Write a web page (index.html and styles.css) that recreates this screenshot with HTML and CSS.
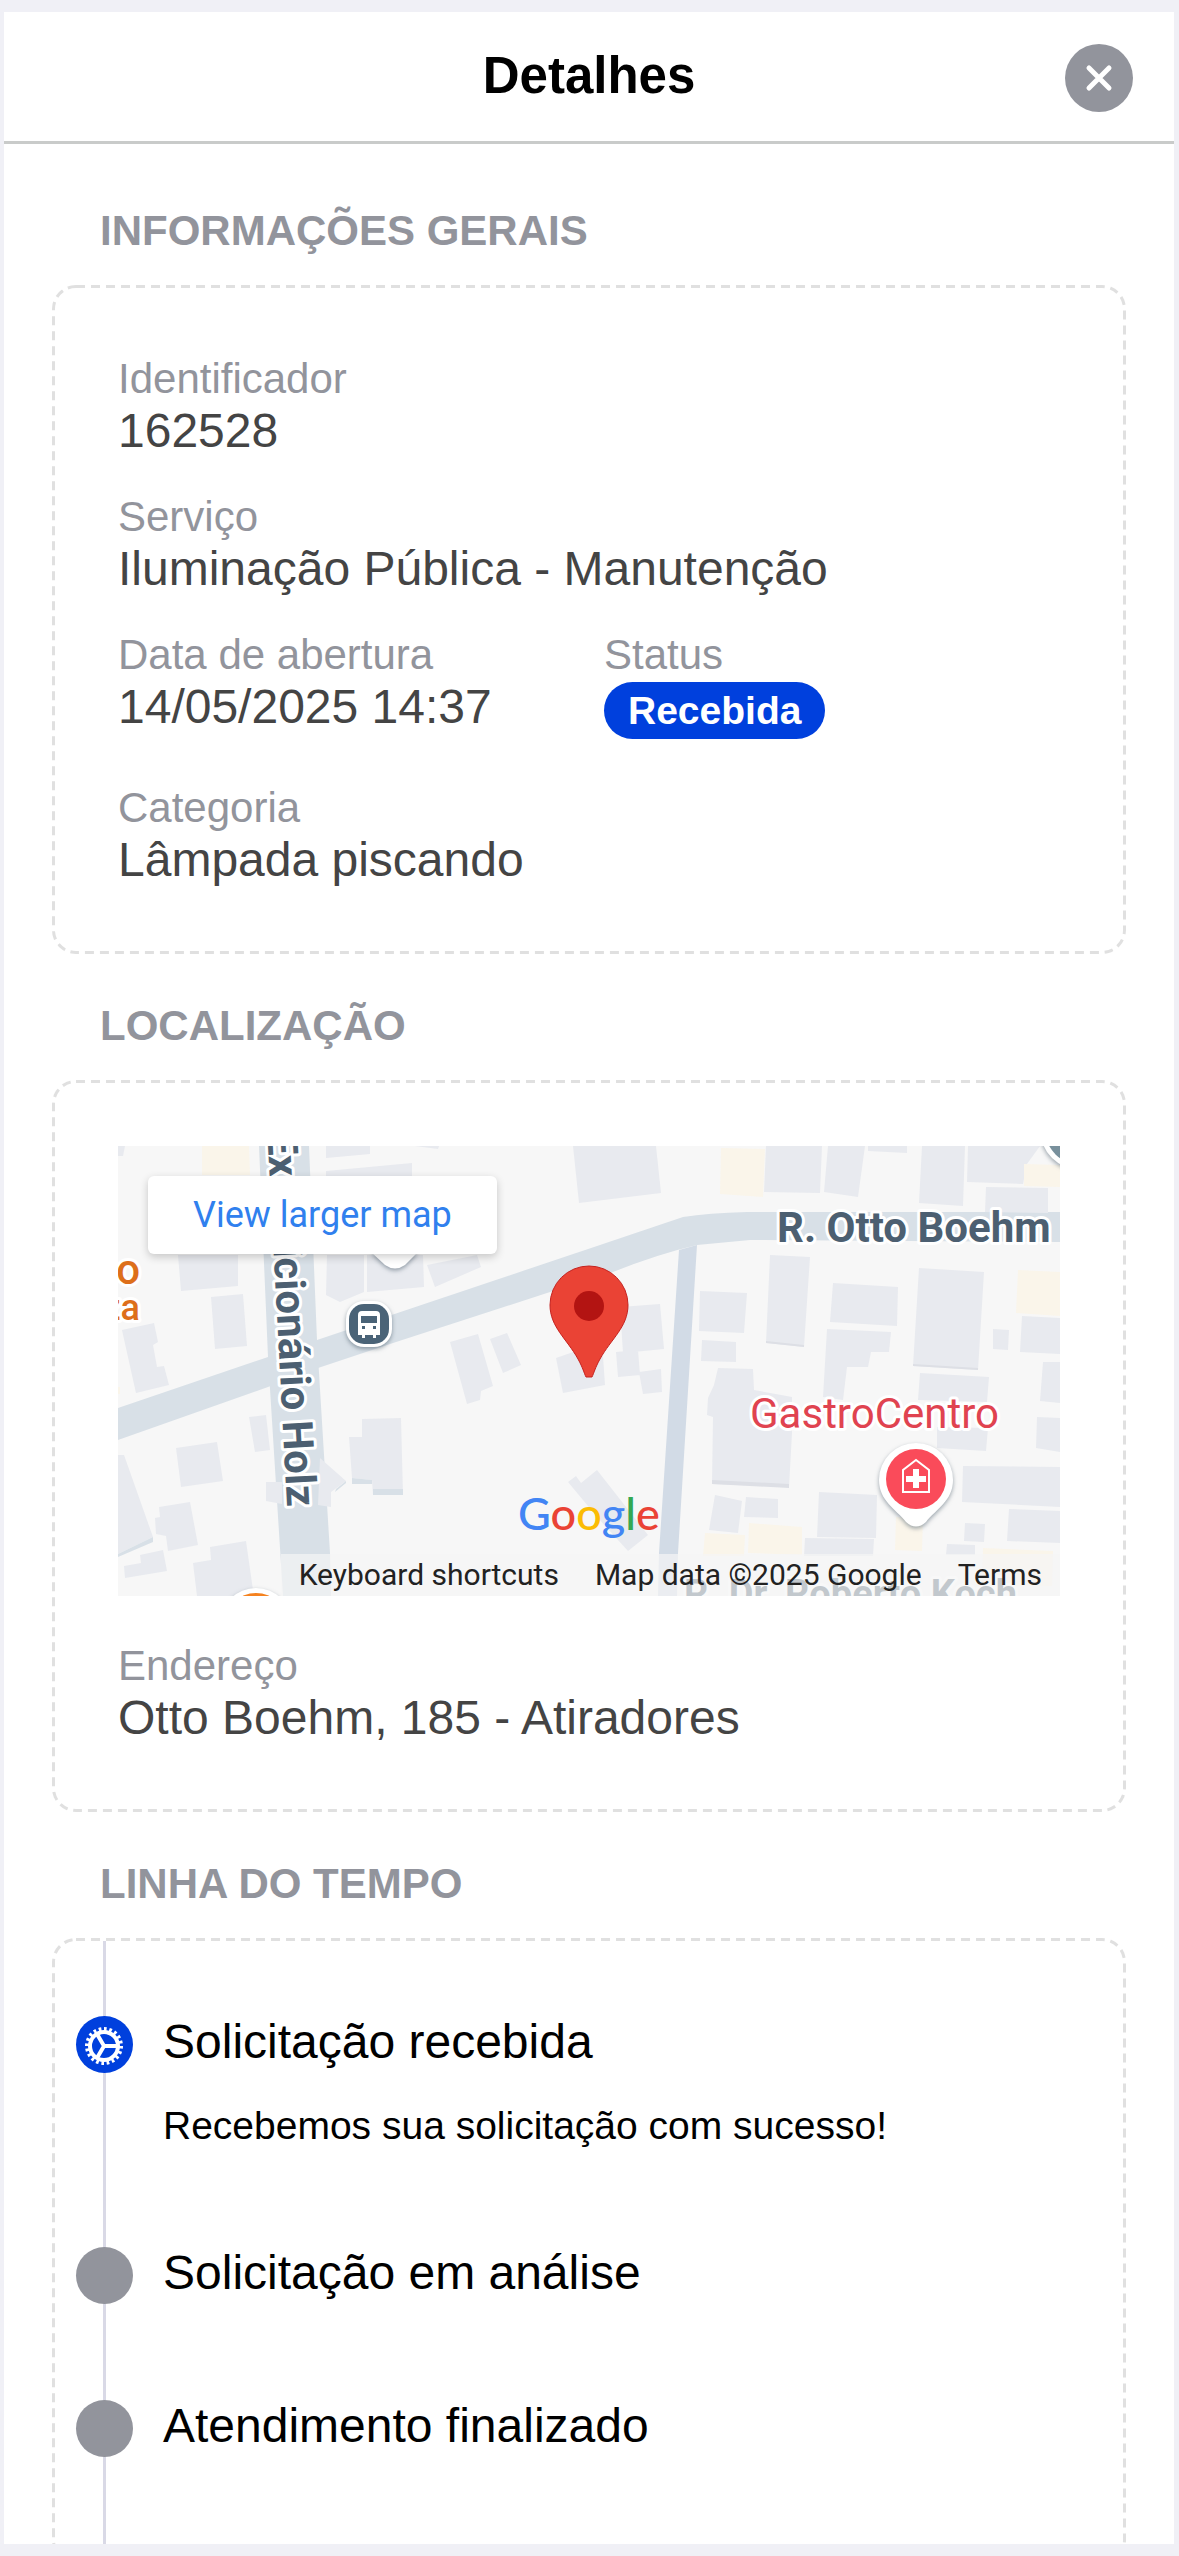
FILE: index.html
```html
<!DOCTYPE html>
<html lang="pt-BR">

<head>
    <meta charset="utf-8">
    <meta name="viewport" content="width=device-width, initial-scale=1">
    <title>Detalhes</title>
    <link rel="stylesheet" href="styles.css">
</head>

<body>
    <main class="modal">
        <header class="modal-header">
            <h1>Detalhes</h1>
            <button class="close" type="button" aria-label="Fechar">
                <svg viewBox="0 0 68 68">
                    <path d="M24 24 44 44M44 24 24 44" />
                </svg>
            </button>
        </header>
        <div class="content">
            <section>
                <h2>INFORMAÇÕES GERAIS</h2>
                <dl class="card">
                    <div class="field">
                        <dt>Identificador</dt>
                        <dd>162528</dd>
                    </div>
                    <div class="field">
                        <dt>Serviço</dt>
                        <dd>Iluminação Pública - Manutenção</dd>
                    </div>
                    <div class="columns">
                        <div class="field">
                            <dt>Data de abertura</dt>
                            <dd>14/05/2025 14:37</dd>
                        </div>
                        <div class="field">
                            <dt>Status</dt>
                            <dd class="badge">Recebida</dd>
                        </div>
                    </div>
                    <div class="field">
                        <dt>Categoria</dt>
                        <dd>Lâmpada piscando</dd>
                    </div>
                </dl>
            </section>

            <section>
                <h2>LOCALIZAÇÃO</h2>
                <div class="card">
                    <div class="map">
                        <svg class="map-canvas" viewBox="0 0 942 450" preserveAspectRatio="xMidYMid slice">
                            <rect class="land" width="942" height="450" />
                            <g class="road">
                                <path d="M0 262 150 211 199 194 482 99 565 71Q590 67 629 66H942V96L632 94 579 99Q540 108 495 126L429 147 275 197 200 222 150 241 0 294z" />
                                <path d="M141 0H191L199 194 212 407 213 450H165L150 211z" />
                            </g>
                            <path class="lane" d="M561 104 579 99 560 407 559 450H540L541 407z" />
                            <!-- buildings -->
                            <g class="building">
                                <path d="M0 0H7L5 10H0zM208 0H252V8L208 12zM297 0H321L320 3zM208 25 294 17V31H208zM455 0H538L543 47 461 57z" />
                                <path d="M60 109H120V140L63 145zM93 151 125 148 129 200 97 203zM4 184 36 177 40 196 35 199 39 221 46 220 51 239 18 247z" />
                                <path d="M209 109H246V146L222 156 208 149zM249 109H305L306 141 249 146zM309 119 359 109 363 121 317 141z" />
                                <path d="M332 196 360 188 375 240 363 245 362 254 349 258zM372 193 389 187 403 219 385 227zM438 212 484 196 487 239 445 247z" />
                                <path d="M131 271 148 269 152 304 137 306zM58 302 99 296 105 335 63 341zM0 309H6L35 391 0 408z" />
                                <path d="M37 372 42 371 41 361 72 356 80 399 50 405 48 390 38 388zM6 420 23 417 22 409 45 404 49 425 7 432z" />
                                <path d="M75 417 93 414 92 401 128 395 135 444V450H79zM244 273 283 272 285 349H255L254 334 234 332 231 291H244z" />
                                <path d="M148 336H164V358L148 355zM202 312 228 335 213 346V361L200 359zM450 336 458 330 463 337 479 324 530 389 510 405 480 372z" />
                                <path d="M648 0H704L702 47 646 46zM710 0H747L740 51 706 46zM750 0H789V7L750 5zM804 0H847L845 60 801 57z" />
                                <path d="M850 0H922L909 18 905 38 849 36zM868 41 930 42V67L867 66zM652 109 692 111 686 201 648 197z" />
                                <path d="M582 145 629 147 626 187 581 185zM584 194 618 196V216L583 215zM715 137 780 141 779 180 712 176z" />
                                <path d="M709 183 773 186 771 206H753L750 221H729L725 254 705 251zM801 122 866 126 860 224 795 220z" />
                                <path d="M904 170 942 172V208L902 206zM875 183 891 184 890 204 875 203zM925 216H942V257L922 255z" />
                                <path d="M802 227 871 231 869 256 800 254zM819 281 870 282 868 305 819 302zM919 271 942 272V306L918 302z" />
                                <path d="M600 222 635 223 636 244 674 251V287L671 341 594 338 595 271 589 269 590 252 596 239zM845 320 942 321V361L844 356z" />
                                <path d="M597 349 624 355 620 387 591 384zM628 351 660 353V372L626 371zM701 346 759 349 758 392 699 391zM687 392 756 393 755 410H686z" />
                                <path d="M847 377 867 378 866 396 846 395zM891 363 942 365V397L889 395zM829 398 857 399V409H828z" />
                                <path d="M502 161 542 158 546 203 505 207zM498 206 520 204 522 229 500 231zM521 226 543 223 544 246 525 248z" />
                            </g>
                            <g class="edge">
                                <path d="M0 408 35 391V396L0 411zM234 332 254 334V338H234zM255 343H285V349H255zM228 335 218 343 217 346 228 337z" />
                                <path class="shade" d="M594 334 671 338V342L594 338zM648 195 686 199V201L648 197zM795 218 860 222V224L795 220z" />
                            </g>
                            <g class="commerce">
                                <path d="M84 0H131L132 29H84zM603 2 647 3 645 51 602 48zM906 18 942 19V41L906 40zM900 124 942 126V170L898 167z" />
                                <path d="M587 387 627 389 626 410H585zM631 377 684 381V409L630 407zM778 371 805 372 804 405 777 404zM865 402 935 405 934 440H864zM0 241H2V248H0z" />
                            </g>
                            <!-- street names and places -->
                            <g class="street">
                                <text x="659" y="96">R. Otto Boehm</text>
                                <text transform="translate(169 361) rotate(87)" text-anchor="end">R. Expedicionário Holz</text>
                                <text class="street-small" x="566" y="461">R. Dr. Roberto Koch</text>
                            </g>
                            <text class="place" x="632" y="282">GastroCentro</text>
                            <text class="food" x="22" y="138" text-anchor="end">o</text>
                            <text class="food food-small" x="22" y="174" text-anchor="end">za</text>
                            <!-- markers -->
                            <g class="marker">
                                <path d="M253 106 267 119Q277 126 287 119L300 106z" />
                                <circle cx="963" cy="-17" r="41" />
                                <circle cx="138" cy="478" r="36" />
                                <rect x="228" y="155" width="46" height="46" rx="18" />
                                <path d="M798 297A37 37 0 0 0 761 334C761 355 778 363 788 376Q798 385 808 376C818 363 835 355 835 334A37 37 0 0 0 798 297z" />
                            </g>
                            <circle fill="#78909c" cx="963" cy="-17" r="36" />
                            <circle fill="#f5821f" cx="138" cy="478" r="31" />
                            <rect fill="#4a6377" x="231" y="158" width="40" height="40" rx="15" />
                            <path fill="#fff" d="M244 165H258Q262 165 262 169V189H258V192H255V189H247V192H244V189H240V169Q240 165 244 165z" />
                            <path fill="#4a6377" d="M243 170H259V177H243zM244 180h3v3h-3zM255 180h3v3h-3z" />
                            <circle fill="#fa4b5a" cx="798" cy="333" r="30" />
                            <path fill="none" stroke="#fff" stroke-width="2" d="M785 346V324L798 314 811 324V346z" />
                            <path stroke="#fff" stroke-width="6" d="M798 323V342M788 333H808" />
                            <path fill="#ea4335" stroke="#c5221f" d="M471 120A39 39 0 0 0 432 159C432 181 449 193 460 213 465 222 466 227 468 231H474C476 227 477 222 482 213 493 193 510 181 510 159A39 39 0 0 0 471 120z" />
                            <circle fill="#b31412" cx="471" cy="160" r="15" />
                            <text class="brand" x="400" y="384"><tspan fill="#4285f4">G</tspan><tspan fill="#ea4335">o</tspan><tspan fill="#fbbc04">o</tspan><tspan fill="#4285f4">g</tspan><tspan fill="#34a853">l</tspan><tspan fill="#ea4335">e</tspan></text>
                        </svg>
                        <a class="map-link" href="#">View larger map</a>
                        <div class="map-footer">
                            <button type="button">Keyboard shortcuts</button>
                            <span>Map data ©2025 Google</span>
                            <a href="#">Terms</a>
                        </div>
                    </div>
                    <dl class="field">
                        <dt>Endereço</dt>
                        <dd>Otto Boehm, 185 - Atiradores</dd>
                    </dl>
                </div>
            </section>

            <section>
                <h2>LINHA DO TEMPO</h2>
                <ol class="card timeline">
                    <li>
                        <span class="dot active">
                            <svg viewBox="0 0 57 57">
                                <circle class="gear-teeth" cx="28" cy="30" r="16" pathLength="40" />
                                <circle class="gear-ring" cx="28" cy="30" r="14" />
                                <path class="gear-ring" d="M28 30H42M28 30 21 18M28 30 21 42" />
                            </svg>
                        </span>
                        <div>
                            <h3>Solicitação recebida</h3>
                            <p>Recebemos sua solicitação com sucesso!</p>
                        </div>
                    </li>
                    <li>
                        <span class="dot"></span>
                        <h3>Solicitação em análise</h3>
                    </li>
                    <li>
                        <span class="dot"></span>
                        <h3>Atendimento finalizado</h3>
                    </li>
                </ol>
            </section>
        </div>
    </main>
</body>

</html>
```
FILE: styles.css
```css
* {
    box-sizing: border-box;
    margin: 0;
    padding: 0;
}

body {
    display: flex;
    height: 100vh;
    padding: 12px 5px 12px 4px;
    background: #f0f0f6;
    font-family: "Liberation Sans", Arial, sans-serif;
}

.modal {
    flex: 1;
    display: flex;
    flex-direction: column;
    min-width: 0;
    background: #fff;
}

.modal-header {
    display: grid;
    grid-template-columns: 68px 1fr 68px;
    align-items: start;
    padding: 32px 41px 29px;
    border-bottom: 3px solid #c9cbca;
}

h1 {
    grid-column: 2;
    font-size: 51px;
    line-height: 64px;
    text-align: center;
}

.close {
    width: 68px;
    height: 68px;
    border: 0;
    border-radius: 50%;
    background: #92949c;
    cursor: pointer;
}

.close svg {
    display: block;
    fill: none;
    stroke: #fff;
    stroke-width: 5;
    stroke-linecap: round;
}

.content {
    flex: 1;
    min-height: 0;
    padding: 15px 48px 0;
    overflow-y: auto;
    scrollbar-width: none;
}

h2 {
    margin: 48px 48px 30px;
    color: #92949c;
    font-size: 42px;
    line-height: 48px;
}

/* dashed outline drawn as a background, border-style has no dash length */
.card {
    display: flex;
    flex-direction: column;
    gap: 30px;
    padding: 63px;
    border: 3px solid transparent;
    border-radius: 24px;
    background: url("data:image/svg+xml,%3Csvg xmlns='http://www.w3.org/2000/svg' width='100%25' height='100%25'%3E%3Crect width='100%25' height='100%25' rx='24' fill='none' stroke='%23e0e0e0' stroke-width='6' stroke-dasharray='9 6'/%3E%3C/svg%3E") border-box;
}

.columns {
    display: grid;
    grid-template-columns: 1fr 1fr;
    gap: 30px;
}

.field {
    padding-top: 4px;
}

dt {
    color: #92949c;
    font-size: 42px;
    line-height: 48px;
}

dd {
    color: #444;
    font-size: 48px;
    line-height: 56px;
}

.badge {
    width: fit-content;
    margin: 3px 0 11px;
    padding: 0 24px;
    border-radius: 29px;
    background: #0040dd;
    color: #fff;
    font-size: 39px;
    font-weight: bold;
    line-height: 57px;
}

/* map */
.map {
    position: relative;
    height: 450px;
    margin-bottom: 12px;
    overflow: hidden;
    font-family: Roboto, sans-serif;
}

.map-canvas {
    display: block;
    width: 100%;
    height: 100%;
}

.land {
    fill: #f7f7f7;
}

.road {
    fill: #d8e0e7;
}

.lane {
    fill: #d2dbe6;
}

.building {
    fill: #e8eaef;
}

.edge {
    fill: #d8e0e7;
}

.shade {
    fill: #dddfe5;
}

.commerce {
    fill: #faf5ea;
}

.map-canvas text {
    font-size: 42px;
    stroke: #fff;
    stroke-width: 6px;
    stroke-linejoin: round;
    paint-order: stroke;
}

.street {
    fill: #4c5f71;
    font-weight: 700;
}

.map-canvas .street-small {
    font-size: 38px;
}

.place {
    fill: #e04350;
}

.food {
    fill: #dd6f1b;
    font-weight: 500;
}

.map-canvas .food-small {
    font-size: 36px;
}

.marker {
    fill: #fff;
    filter: drop-shadow(0 2px 2px rgba(60, 80, 95, .5));
}

.map-canvas .brand {
    font-family: Lato, sans-serif;
    font-size: 45px;
    font-weight: 500;
    stroke: none;
}

.map-link {
    position: absolute;
    top: 30px;
    left: 30px;
    padding: 0 45px;
    border-radius: 6px;
    background: #fff;
    box-shadow: 0 3px 9px rgba(0, 0, 0, .2);
    color: #3080ee;
    font-size: 36px;
    line-height: 78px;
    text-decoration: none;
}

.map-footer {
    position: absolute;
    right: 0;
    bottom: 0;
    display: flex;
    gap: 36px;
    padding: 0 18px;
    background: rgba(245, 245, 245, .7);
    color: #222;
    font-size: 30px;
    line-height: 42px;
}

.map-footer button,
.map-footer a {
    border: 0;
    background: none;
    color: inherit;
    font: inherit;
    text-decoration: none;
}

/* timeline */
.timeline {
    position: relative;
    gap: 96px;
    padding: 75px 21px 104px;
    list-style: none;
}

.timeline::before {
    content: "";
    position: absolute;
    top: 0;
    bottom: 0;
    left: 48px;
    width: 3px;
    background: #d9d9e6;
}

.timeline li {
    position: relative;
    display: flex;
    gap: 30px;
}

.dot {
    flex: none;
    width: 57px;
    height: 57px;
    border-radius: 50%;
    background: #92949c;
}

.dot svg {
    display: block;
    fill: none;
    stroke: #fff;
}

.active {
    background: #0040dd;
}

.gear-teeth {
    stroke-width: 6;
    stroke-dasharray: 1;
}

.gear-ring {
    stroke-width: 4;
}

h3 {
    font-size: 48px;
    font-weight: normal;
    line-height: 51px;
}

.timeline p {
    margin: 36px 0 3px;
    font-size: 39px;
    line-height: 45px;
}
```
